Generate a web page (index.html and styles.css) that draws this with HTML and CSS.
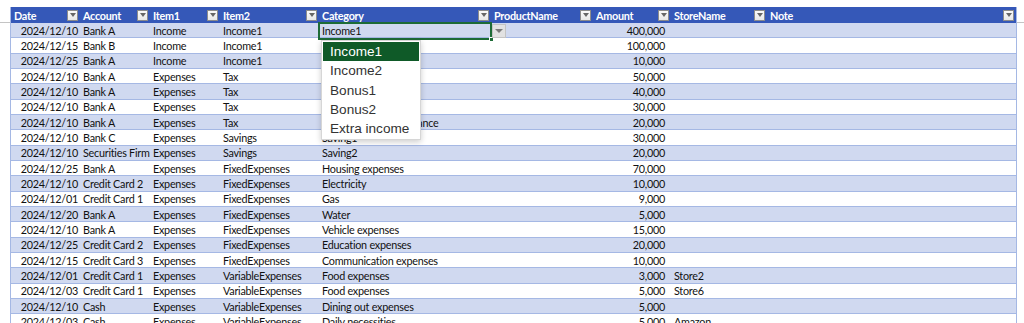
FILE: index.html
```html
<!DOCTYPE html>
<html lang="en">
<head>
  <meta charset="UTF-8" />
  <title>Household Ledger</title>
  <link rel="stylesheet" href="styles.css">
</head>
<body>
  <table class="ledger">
    <colgroup>
      <col class="c-date"><col class="c-acc"><col class="c-item1"><col class="c-item2"><col class="c-cat">
      <col class="c-prod"><col class="c-amt"><col class="c-store"><col class="c-note">
    </colgroup>
    <thead>
      <tr>
        <th><div class="hd">Date<span class="flt"></span></div></th>
        <th><div class="hd">Account<span class="flt"></span></div></th>
        <th><div class="hd">Item1<span class="flt"></span></div></th>
        <th><div class="hd">Item2<span class="flt"></span></div></th>
        <th><div class="hd">Category<span class="flt"></span></div></th>
        <th><div class="hd">ProductName<span class="flt"></span></div></th>
        <th><div class="hd">Amount<span class="flt"></span></div></th>
        <th><div class="hd">StoreName<span class="flt"></span></div></th>
        <th><div class="hd">Note<span class="flt"></span></div></th>
      </tr>
    </thead>
    <tbody>
      <tr><td class="num">2024/12/10</td><td>Bank A</td><td>Income</td><td>Income1</td>
        <td class="active">Income1
          <div class="sel"><span class="handle"></span></div>
          <div class="dd-btn"></div>
          <ul class="dd-list">
            <li class="on">Income1</li>
            <li>Income2</li>
            <li>Bonus1</li>
            <li>Bonus2</li>
            <li>Extra income</li>
          </ul>
        </td>
        <td></td><td class="amt">400,000</td><td></td><td></td></tr>
      <tr><td class="num">2024/12/15</td><td>Bank B</td><td>Income</td><td>Income1</td><td>Income2</td><td></td><td class="amt">100,000</td><td></td><td></td></tr>
      <tr><td class="num">2024/12/25</td><td>Bank A</td><td>Income</td><td>Income1</td><td>Bonus1</td><td></td><td class="amt">10,000</td><td></td><td></td></tr>
      <tr><td class="num">2024/12/10</td><td>Bank A</td><td>Expenses</td><td>Tax</td><td>Income tax</td><td></td><td class="amt">50,000</td><td></td><td></td></tr>
      <tr><td class="num">2024/12/10</td><td>Bank A</td><td>Expenses</td><td>Tax</td><td>Resident tax</td><td></td><td class="amt">40,000</td><td></td><td></td></tr>
      <tr><td class="num">2024/12/10</td><td>Bank A</td><td>Expenses</td><td>Tax</td><td>Pension</td><td></td><td class="amt">30,000</td><td></td><td></td></tr>
      <tr><td class="num">2024/12/10</td><td>Bank A</td><td>Expenses</td><td>Tax</td><td>National Health Insurance</td><td></td><td class="amt">20,000</td><td></td><td></td></tr>
      <tr><td class="num">2024/12/10</td><td>Bank C</td><td>Expenses</td><td>Savings</td><td>Saving1</td><td></td><td class="amt">30,000</td><td></td><td></td></tr>
      <tr><td class="num">2024/12/10</td><td>Securities Firm</td><td>Expenses</td><td>Savings</td><td>Saving2</td><td></td><td class="amt">20,000</td><td></td><td></td></tr>
      <tr><td class="num">2024/12/25</td><td>Bank A</td><td>Expenses</td><td>FixedExpenses</td><td>Housing expenses</td><td></td><td class="amt">70,000</td><td></td><td></td></tr>
      <tr><td class="num">2024/12/10</td><td>Credit Card 2</td><td>Expenses</td><td>FixedExpenses</td><td>Electricity</td><td></td><td class="amt">10,000</td><td></td><td></td></tr>
      <tr><td class="num">2024/12/01</td><td>Credit Card 1</td><td>Expenses</td><td>FixedExpenses</td><td>Gas</td><td></td><td class="amt">9,000</td><td></td><td></td></tr>
      <tr><td class="num">2024/12/20</td><td>Bank A</td><td>Expenses</td><td>FixedExpenses</td><td>Water</td><td></td><td class="amt">5,000</td><td></td><td></td></tr>
      <tr><td class="num">2024/12/10</td><td>Bank A</td><td>Expenses</td><td>FixedExpenses</td><td>Vehicle expenses</td><td></td><td class="amt">15,000</td><td></td><td></td></tr>
      <tr><td class="num">2024/12/25</td><td>Credit Card 2</td><td>Expenses</td><td>FixedExpenses</td><td>Education expenses</td><td></td><td class="amt">20,000</td><td></td><td></td></tr>
      <tr><td class="num">2024/12/15</td><td>Credit Card 3</td><td>Expenses</td><td>FixedExpenses</td><td>Communication expenses</td><td></td><td class="amt">10,000</td><td></td><td></td></tr>
      <tr><td class="num">2024/12/01</td><td>Credit Card 1</td><td>Expenses</td><td>VariableExpenses</td><td>Food expenses</td><td></td><td class="amt">3,000</td><td>Store2</td><td></td></tr>
      <tr><td class="num">2024/12/03</td><td>Credit Card 1</td><td>Expenses</td><td>VariableExpenses</td><td>Food expenses</td><td></td><td class="amt">5,000</td><td>Store6</td><td></td></tr>
      <tr><td class="num">2024/12/10</td><td>Cash</td><td>Expenses</td><td>VariableExpenses</td><td>Dining out expenses</td><td></td><td class="amt">5,000</td><td></td><td></td></tr>
      <tr><td class="num">2024/12/03</td><td>Cash</td><td>Expenses</td><td>VariableExpenses</td><td>Daily necessities</td><td></td><td class="amt">5,000</td><td>Amazon</td><td></td></tr>
    </tbody>
  </table>
</body>
</html>
```

FILE: styles.css
```css
* {
  box-sizing: border-box;
}
html, body {
  margin: 0;
  padding: 0;
}
body {
  padding: 7px 0 0 10px;
  background: #fff linear-gradient(#c4c4c4, #c4c4c4) 0 22px / 100% 1px no-repeat;
  font-family: Lato, 'Liberation Sans', sans-serif;
  font-size: 10.8px;
  letter-spacing: -0.25px;
  color: #111;
  overflow: hidden;
}
.ledger {
  border-collapse: separate;
  border-spacing: 0;
  table-layout: fixed;
  width: 1005px;
  border-left: 1px solid #a5b8e4;
  border-right: 1px solid #a5b8e4;
}
.c-date { width: 69px; }
.c-acc { width: 70px; }
.c-item1 { width: 70px; }
.c-item2 { width: 99px; }
.c-cat { width: 172px; }
.c-prod { width: 102px; }
.c-amt { width: 78px; }
.c-store { width: 96px; }
.c-note { width: 249px; }

.ledger th {
  background-color: #3558b8;
  color: #fff;
  font-weight: 700;
  height: 16px;
  padding: 0 2px 0 3px;
  text-align: left;
}
.hd {
  display: flex;
  align-items: center;
  justify-content: space-between;
  white-space: nowrap;
}
.flt {
  width: 11px;
  height: 11px;
  flex: none;
  background: linear-gradient(#fafafa, #e8e8e8);
  border: 1px solid #8c8c8c;
  display: flex;
  align-items: center;
  justify-content: center;
}
.flt::after {
  content: '';
  border-left: 3px solid transparent;
  border-right: 3px solid transparent;
  border-top: 4px solid #666;
}
.ledger td {
  height: 15.33px;
  padding: 0 3px 0 3px;
  border-bottom: 1px solid #a5b8e4;
  white-space: nowrap;
  overflow: hidden;
  line-height: 13px;
}
.ledger tbody tr:nth-child(odd) td {
  background-color: #d0d9f0;
}
.ledger td.num {
  text-align: right;
  padding-right: 2px;
}
.ledger td.amt {
  text-align: right;
  padding-right: 6px;
}

/* active cell with its validation list */
.ledger td.active {
  position: relative;
  overflow: visible;
}
.sel {
  position: absolute;
  left: -1px;
  top: -1px;
  width: 174px;
  height: 18px;
  border: 2px solid #1d6b36;
}
.handle {
  position: absolute;
  right: -4px;
  bottom: -4px;
  width: 5px;
  height: 5px;
  background: #1d6b36;
  border: 1px solid #fff;
}
.dd-btn {
  position: absolute;
  left: 173px;
  top: 1px;
  width: 14px;
  height: 14px;
  background: #e2e2e2;
  border: 1px solid #c4c4c4;
  display: flex;
  align-items: center;
  justify-content: center;
}
.dd-btn::after {
  content: '';
  border-left: 4px solid transparent;
  border-right: 4px solid transparent;
  border-top: 4px solid #7a7a7a;
}
.dd-list {
  position: absolute;
  left: 2px;
  top: 17px;
  width: 100px;
  margin: 0;
  padding: 1px;
  list-style: none;
  background: #fff;
  border: 1px solid #d6d6d6;
  box-shadow: 0 2px 6px rgba(0, 0, 0, 0.2);
  z-index: 10;
  font-family: 'Liberation Sans', Arial, sans-serif;
  font-size: 13.6px;
  letter-spacing: 0;
  color: #333;
}
.dd-list li {
  height: 19.3px;
  line-height: 19px;
  padding-left: 7px;
}
.dd-list li.on {
  background-color: #0f5a28;
  color: #fff;
}
```
